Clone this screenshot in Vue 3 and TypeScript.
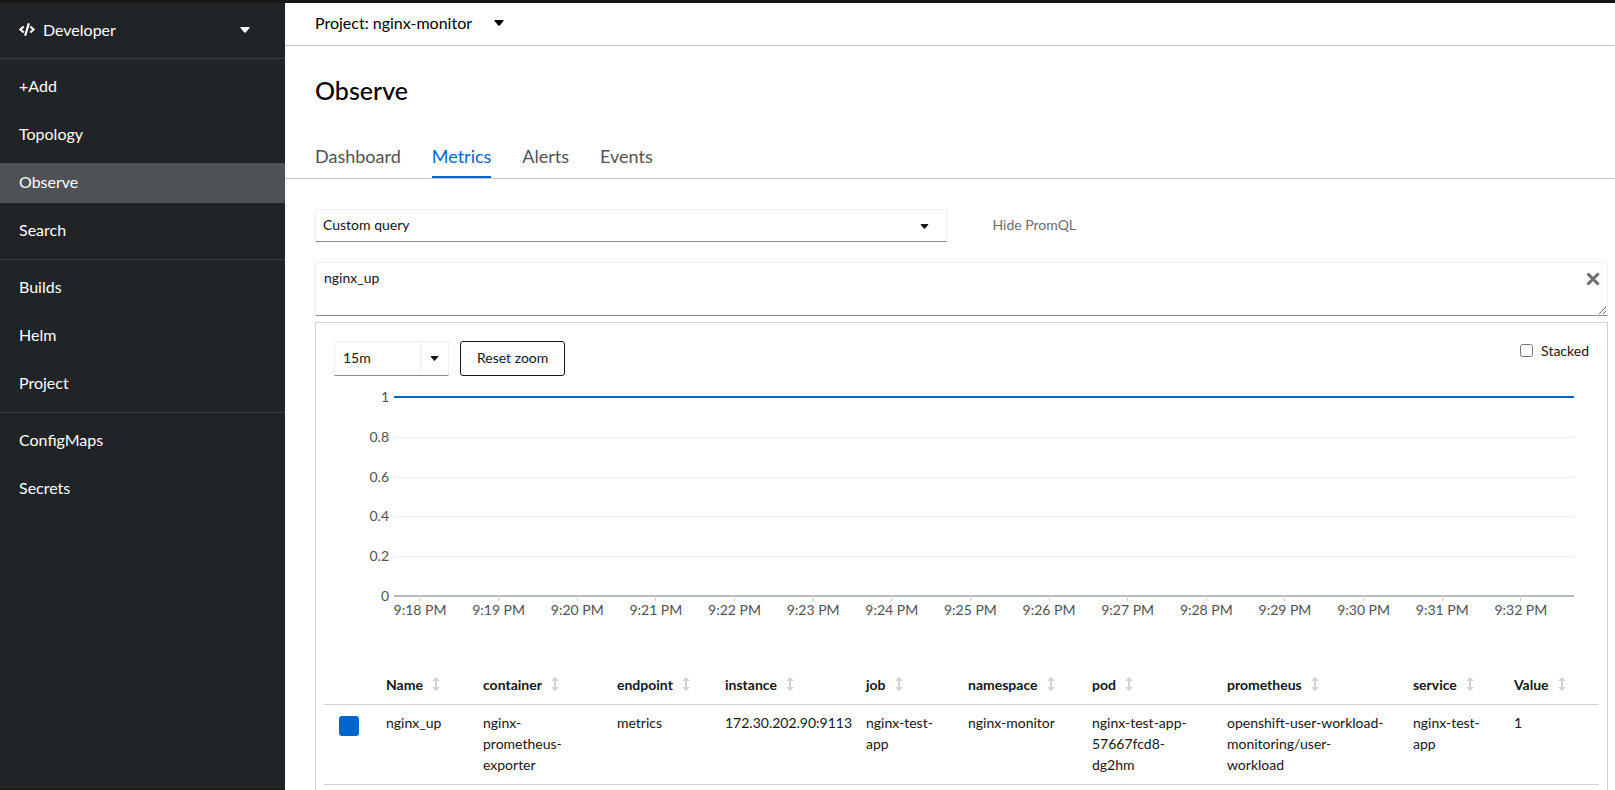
<script setup lang="ts">
import { ref } from 'vue'

interface Column { name: string; share: number }

const navSections = [
  ['+Add', 'Topology', 'Observe', 'Search'],
  ['Builds', 'Helm', 'Project'],
  ['ConfigMaps', 'Secrets'],
]
const tabs = ['Dashboard', 'Metrics', 'Alerts', 'Events']
const query = ref('nginx_up')
const span = ref('15m')
const stacked = ref(false)

const yTicks = ['1', '0.8', '0.6', '0.4', '0.2', '0']
const plotHeight = 199
const yAt = (i: number): number => Math.round((i * plotHeight) / 5) + 10
const xTicks = Array.from({ length: 15 }, (_, i) => ({
  label: `9:${18 + i} PM`,
  left: `${(2.2 + i * 6.664).toFixed(3)}%`,
}))

const swatchShare = 54
const columns: Column[] = [
  { name: 'Name', share: 97 },
  { name: 'container', share: 134 },
  { name: 'endpoint', share: 108 },
  { name: 'instance', share: 141 },
  { name: 'job', share: 102 },
  { name: 'namespace', share: 124 },
  { name: 'pod', share: 135 },
  { name: 'prometheus', share: 186 },
  { name: 'service', share: 101 },
  { name: 'Value', share: 93 },
]
const total = columns.reduce((sum, c) => sum + c.share, swatchShare)
const pct = (share: number): string => `${((share / total) * 100).toFixed(3)}%`
const row = [
  'nginx_up', 'nginx-prometheus-exporter', 'metrics', '172.30.202.90:9113', 'nginx-test-app',
  'nginx-monitor', 'nginx-test-app-57667fcd8-dg2hm', 'openshift-user-workload-monitoring/user-workload',
  'nginx-test-app', '1',
]
</script>

<template>
  <div class="shell">
    <aside class="sidebar">
      <button class="perspective" type="button">
        <svg class="code" viewBox="0 0 640 512" aria-hidden="true">
          <path d="M278.900 511.500l-61-17.700c-6.400-1.800-10-8.500-8.200-14.900L346.200 8.700c1.800-6.400 8.500-10 14.900-8.200l61 17.700c6.400 1.800 10 8.500 8.200 14.900L293.800 503.300c-1.900 6.400-8.500 10.100-14.900 8.200zm-114-112.200l43.500-46.400c4.600-4.900 4.300-12.700-.8-17.200L117 256l90.600-79.700c5.100-4.500 5.500-12.300.8-17.200l-43.500-46.400c-4.500-4.800-12.100-5.100-17-.5L3.800 247.200c-5.100 4.700-5.100 12.800 0 17.500l144.100 135.100c4.900 4.600 12.500 4.400 17-.5zm327.200.6l144.100-135.100c5.100-4.700 5.100-12.800 0-17.500L492.100 112.100c-4.800-4.500-12.400-4.300-17 .5L431.600 159c-4.600 4.900-4.300 12.700.8 17.200L523 256l-90.600 79.700c-5.100 4.500-5.500 12.300-.8 17.200l43.500 46.400c4.500 4.900 12.100 5.100 17 .6z" />
        </svg>
        <span>Developer</span>
        <svg class="caret" viewBox="0 0 10 6" aria-hidden="true"><path d="M1 0h8q1 .3.500 1L5.700 5.500q-.7.600-1.400 0L.500 1Q0 .300 1 0z" /></svg>
      </button>
      <nav>
        <ul v-for="(section, i) in navSections" :key="i" class="nav-section">
          <li v-for="item in section" :key="item">
            <a href="#" :class="{ current: item === 'Observe' }">{{ item }}</a>
          </li>
        </ul>
      </nav>
    </aside>

    <main class="main">
      <div class="project-bar">
        <button class="project" type="button">
          <span>Project: nginx-monitor</span>
          <svg class="caret" viewBox="0 0 10 6" aria-hidden="true"><path d="M1 0h8q1 .3.500 1L5.700 5.500q-.7.600-1.400 0L.500 1Q0 .300 1 0z" /></svg>
        </button>
      </div>
      <h1>Observe</h1>
      <nav class="tabs">
        <a v-for="tab in tabs" :key="tab" href="#" :class="{ active: tab === 'Metrics' }">{{ tab }}</a>
      </nav>

      <div class="content">
        <div class="query-row">
          <div class="select-wrap">
            <select aria-label="Query"><option>Custom query</option></select>
            <svg class="caret small" viewBox="0 0 10 6" aria-hidden="true"><path d="M1 0h8q1 .3.500 1L5.700 5.500q-.7.600-1.400 0L.500 1Q0 .300 1 0z" /></svg>
          </div>
          <button class="link" type="button">Hide PromQL</button>
        </div>

        <div class="promql">
          <textarea v-model="query" aria-label="PromQL expression" spellcheck="false"></textarea>
          <button class="clear" type="button" aria-label="Clear query">
            <svg viewBox="0 0 14 14" aria-hidden="true"><path d="M1.500 1.500l11 11M12.500 1.500l-11 11" /></svg>
          </button>
        </div>

        <section class="panel">
          <div class="controls">
            <div class="span">
              <input v-model="span" type="text" aria-label="Time span">
              <button type="button" aria-label="Choose time span">
                <svg class="caret small" viewBox="0 0 10 6" aria-hidden="true"><path d="M1 0h8q1 .3.500 1L5.700 5.500q-.7.600-1.400 0L.500 1Q0 .300 1 0z" /></svg>
              </button>
            </div>
            <button class="reset" type="button">Reset zoom</button>
            <label class="stacked"><input v-model="stacked" type="checkbox"><span>Stacked</span></label>
          </div>

          <svg class="chart" role="img" aria-label="nginx_up over time">
            <g v-for="(t, i) in yTicks" :key="t">
              <text class="y-label" x="-5" :y="yAt(i) + 5">{{ t }}</text>
              <line v-if="i > 0 && i < 5" class="grid" x1="0" x2="100%" :y1="yAt(i)" :y2="yAt(i)" />
            </g>
            <line class="axis" x1="0" x2="100%" :y1="yAt(5)" :y2="yAt(5)" />
            <g v-for="t in xTicks" :key="t.label">
              <line class="tick" :x1="t.left" :x2="t.left" :y1="yAt(5)" :y2="yAt(5) + 5" />
              <text class="x-label" :x="t.left" :y="yAt(5) + 19">{{ t.label }}</text>
            </g>
            <line class="series" x1="0" x2="100%" :y1="yAt(0)" :y2="yAt(0)" />
          </svg>

          <table>
            <colgroup>
              <col :style="{ width: pct(swatchShare) }">
              <col v-for="c in columns" :key="c.name" :style="{ width: pct(c.share) }">
            </colgroup>
            <thead>
              <tr>
                <td></td>
                <th v-for="c in columns" :key="c.name" scope="col">
                  <button type="button">
                    <span>{{ c.name }}</span>
                    <svg viewBox="0 0 8 14" aria-hidden="true"><path d="M4 0L7.500 3.500V4H5V10H7.500V10.500L4 14L.500 10.500V10H3V4H.500V3.500z" /></svg>
                  </button>
                </th>
              </tr>
            </thead>
            <tbody>
              <tr>
                <td class="swatch-cell"><button class="swatch" type="button" aria-label="Toggle series"></button></td>
                <td v-for="(cell, i) in row" :key="i">{{ cell }}</td>
              </tr>
            </tbody>
          </table>
        </section>
      </div>
    </main>
  </div>
</template>

<style>
body { margin: 0; }
</style>

<style scoped>
* { box-sizing: border-box; }
.shell {
  display: flex;
  height: 100vh;
  border-top: 3px solid #151515;
  background: #fff;
  color: #151515;
  font-family: Lato, "Open Sans", sans-serif;
  font-size: 14px;
  line-height: 21px;
}
button, input, select, textarea { font: inherit; color: inherit; }
button { padding: 0; border: 0; background: none; cursor: pointer; }
a { text-decoration: none; }
.caret { width: 10px; height: 6px; fill: currentColor; }
.caret.small { width: 9px; height: 5px; }

.sidebar { flex: 0 0 285px; border-bottom: 1px solid #151515; background: #212427; color: #fff; font-size: 16px; line-height: 24px; }
.perspective { display: flex; align-items: center; width: 100%; height: 55px; padding: 0 35px 2px 19px; }
.code { width: 16px; height: 13px; margin-right: 8px; fill: #fff; }
.perspective .caret { margin-left: auto; }
.nav-section { display: flex; flex-direction: column; gap: 8px; margin: 0; padding: 8px 0; border-top: 1px solid #3c3f42; list-style: none; }
.nav-section a { display: block; padding: 7px 19px 9px; color: #fff; }
.nav-section a.current { background: #4f5255; }

.main { display: flex; flex: 1; flex-direction: column; min-width: 0; overflow: auto; scrollbar-width: none; }
.project-bar { flex: none; height: 43px; padding: 0 30px; border-bottom: 1px solid #c8c8c8; }
.project { display: flex; align-items: center; gap: 22px; height: 40px; padding-bottom: 2px; color: #000; font-size: 16px; }
.project .caret { margin-top: 2px; }
h1 { flex: none; margin: 28px 30px 0; color: #000; font-size: 25px; font-weight: 500; line-height: 32px; }
.tabs { display: flex; flex: none; gap: 31px; margin-top: 32px; padding: 0 30px; border-bottom: 1px solid #c8c8c8; font-size: 18px; line-height: 27px; }
.tabs a { padding: 5px 0 6px; border-bottom: 2px solid transparent; color: #4f5255; }
.tabs a.active { border-color: #06c; color: #06c; }
.content { padding: 30px 7px 0 30px; }

.query-row { display: flex; align-items: center; }
.select-wrap { position: relative; width: calc(50% - 15px); }
select { display: block; width: 100%; height: 33px; padding: 0 7px 2px; border: 1px solid #f0f0f0; border-bottom-color: #8a8d90; border-radius: 0; background: #fff; appearance: none; }
.select-wrap .caret { position: absolute; top: 15px; right: 18px; pointer-events: none; }
.link { margin-left: 46px; padding-bottom: 2px; color: #6a6e73; }
.promql { position: relative; margin-top: 20px; }
textarea { display: block; width: 100%; height: 54px; padding: 4px 50px 4px 8px; border: 1px solid #f0f0f0; border-bottom-color: #8a8d90; border-radius: 0; resize: vertical; outline: 0; }
.clear { position: absolute; top: 10px; right: 8px; width: 14px; height: 14px; }
.clear svg { display: block; stroke: #6a6e73; stroke-width: 3; }

.panel { margin-top: 6px; padding: 18px 8px 20px; border: 1px solid #d2d2d2; }
.controls { display: flex; padding: 0 10px; }
.span { display: flex; width: 115px; height: 35px; border: 1px solid #f0f0f0; border-bottom-color: #8a8d90; }
.span input { flex: 1; min-width: 0; padding: 0 8px 2px; border: 0; outline: 0; }
.span button { width: 28px; border-left: 1px solid #f0f0f0; line-height: 0; }
.reset { height: 35px; margin-left: 11px; padding: 0 16px 2px; border: 1px solid #151515; border-radius: 3px; }
.stacked { display: flex; align-items: center; gap: 8px; height: 18px; margin-left: auto; }
.stacked input { width: 13px; height: 13px; margin: 0; }

.chart { display: block; width: calc(100% - 95px); height: 240px; margin: 11px 0 0 70px; overflow: visible; shape-rendering: crispEdges; }
.chart text { fill: #4f5255; font-size: 14px; }
.y-label { text-anchor: end; }
.x-label { text-anchor: middle; }
.grid { stroke: #ededed; }
.axis { stroke: #b8bbbe; stroke-width: 2; }
.tick { stroke: #d2d2d2; }
.series { stroke: #06c; stroke-width: 2; }

table { width: 100%; margin-top: 40px; border-collapse: collapse; table-layout: fixed; }
th, td { padding: 7px 20px 9px 8px; border-bottom: 1px solid #d2d2d2; text-align: left; vertical-align: top; }
th { padding-right: 4px; }
th button { display: flex; align-items: center; gap: 9px; font-weight: 700; }
th svg { width: 8px; height: 14px; margin-bottom: 2px; fill: #d2d2d2; }
.swatch-cell { padding: 11px 0 0 15px; }
.swatch { display: block; width: 20px; height: 20px; border-radius: 3px; background: #06c; }
</style>
